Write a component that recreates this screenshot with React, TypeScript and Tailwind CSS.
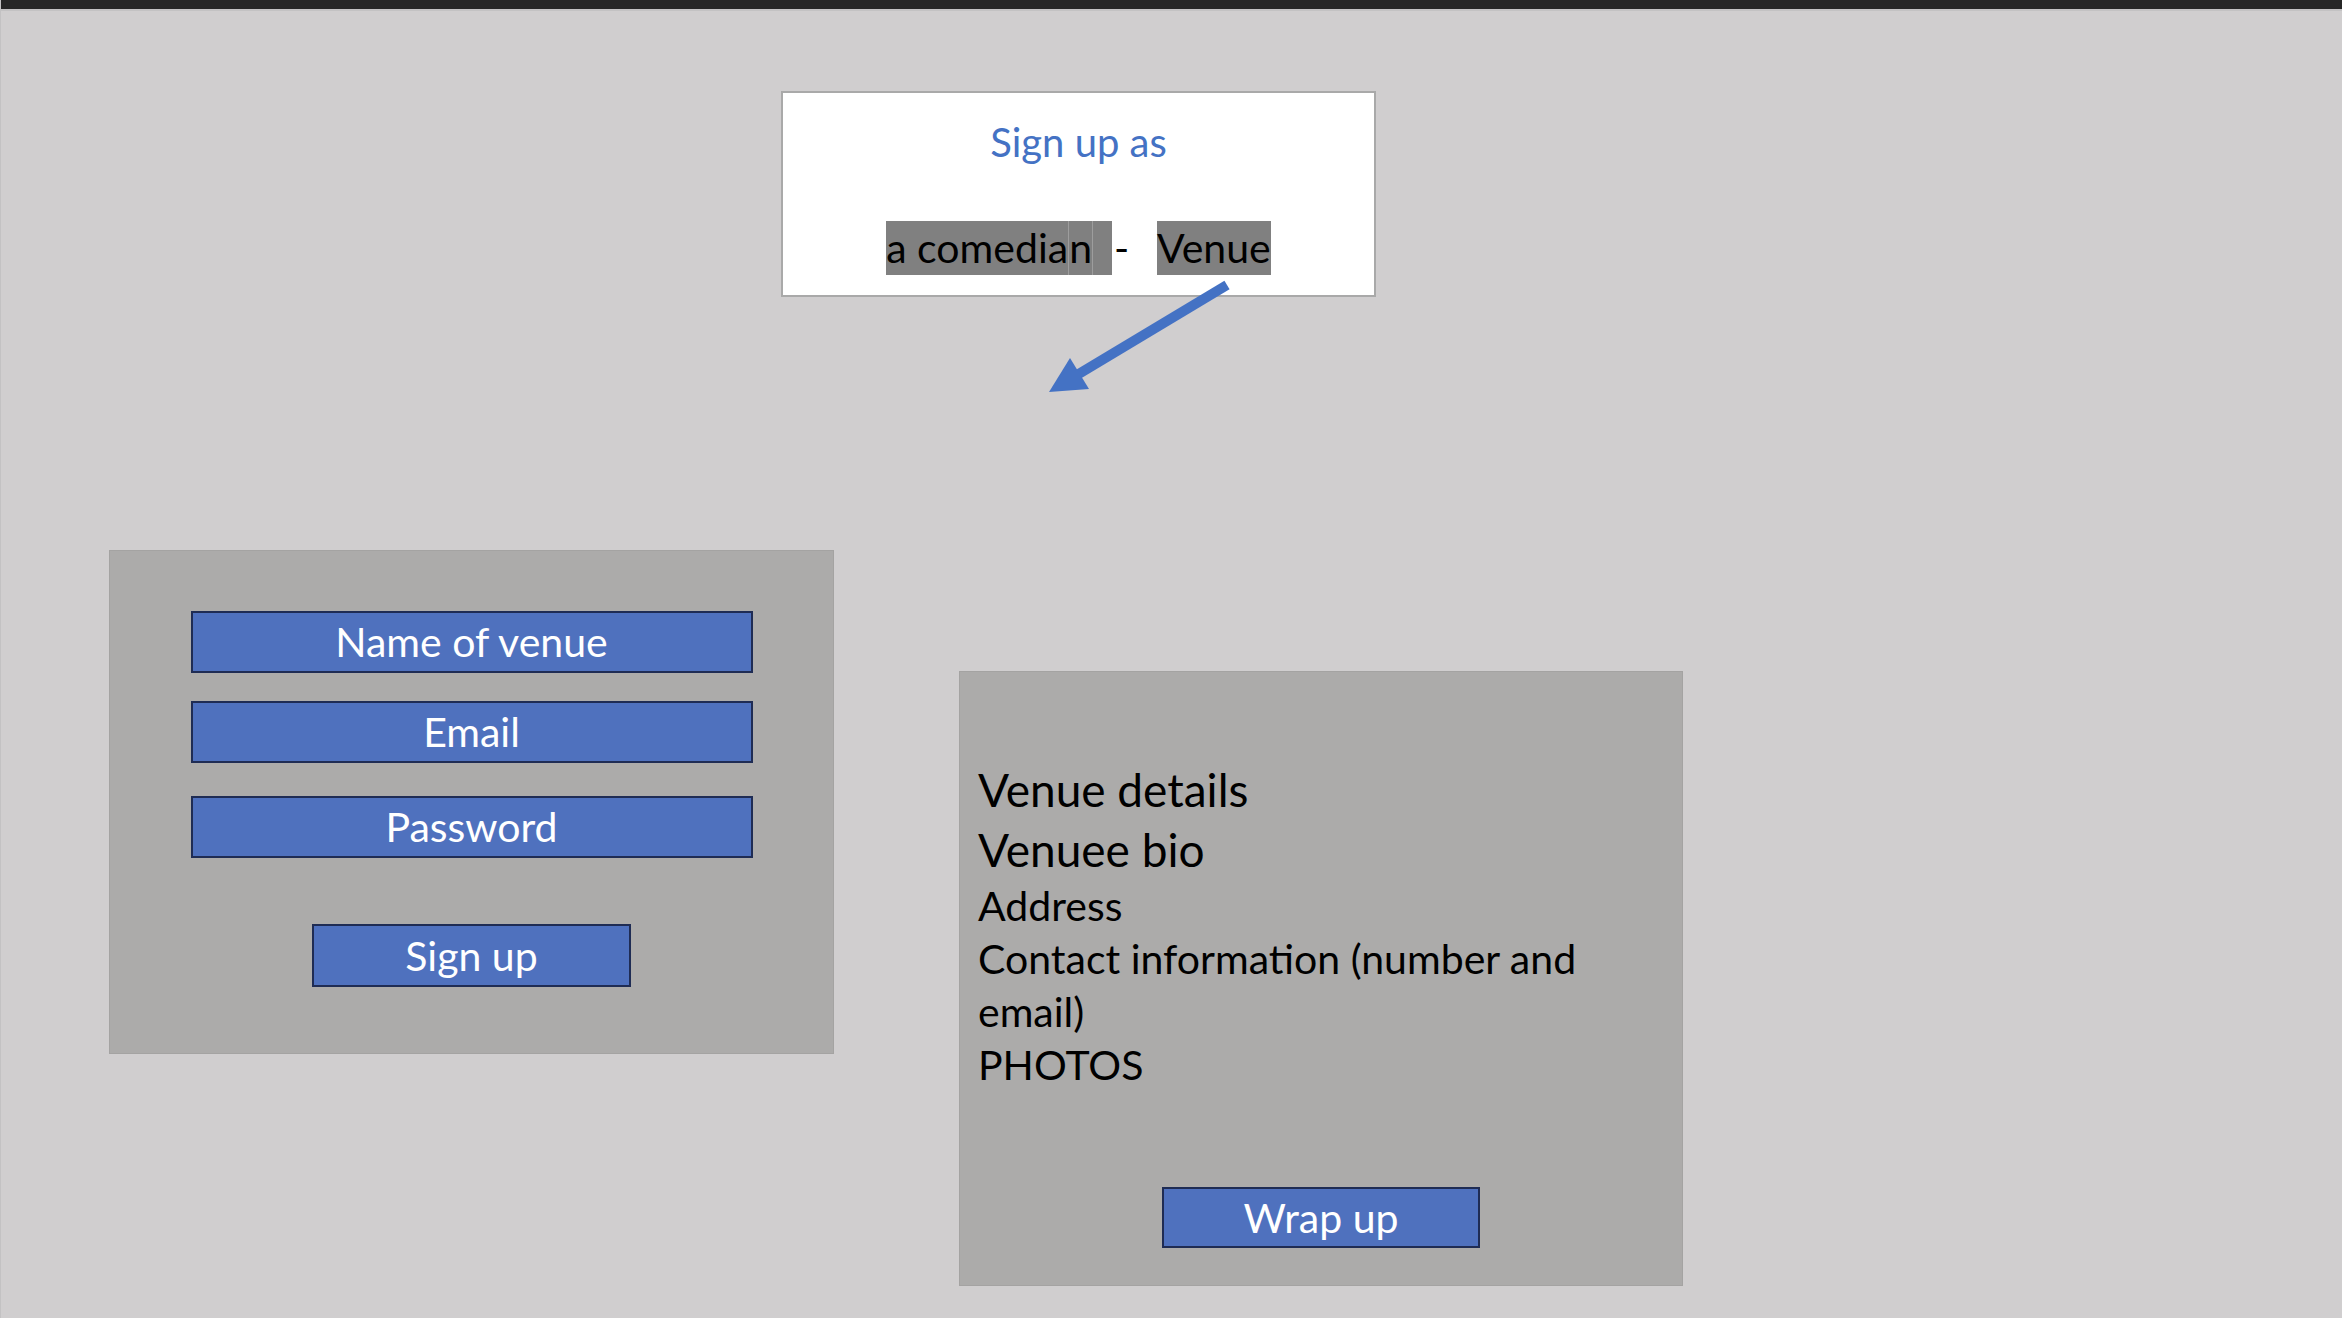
const blue = 'border-2 border-[#1f2c54] bg-[#4f71be] text-center text-white';

function Field({ label }: { label: string }) {
  return (
    <div className={`${blue} h-[62px] w-[562px] text-[41px] leading-[58px]`}>{label}</div>
  );
}

export default function App() {
  return (
    <div className="relative h-[1318px] w-full overflow-hidden border-l border-[#c3c2c3] bg-[#d0cecf] font-['Lato',sans-serif]">
      <div className="h-[9px] bg-[#262626]" />
      <div className="h-[2px] bg-[#c3c2c3]" />

      {/* role picker */}
      <div className="ml-[780px] mt-[80px] h-[206px] w-[595px] border-2 border-[#a9a9a9] bg-white pt-[24px]">
        <p className="text-center text-[40px] leading-[50px] text-[#4472c4]">Sign up as</p>
        <div className="mt-[54px] flex justify-center text-[41px] leading-[54px] text-black">
          <span className="flex bg-[#808080]">
            <span>a comedia</span>
            <span className="border-l border-[#9d9d9d]">n</span>
            <span className="w-[20px] border-l border-[#9d9d9d]" />
          </span>
          <span className="w-[45px] pl-[2px]">-</span>
          <span className="bg-[#808080]">Venue</span>
        </div>
      </div>

      <div className="mt-[253px] flex items-start">
        {/* sign up form */}
        <div className="ml-[108px] flex h-[504px] w-[725px] flex-col items-center border border-[#a4a3a2] bg-[#acabaa] pt-[60px]">
          <Field label="Name of venue" />
          <div className="mt-[28px]">
            <Field label="Email" />
          </div>
          <div className="mt-[33px]">
            <Field label="Password" />
          </div>
          <button className={`${blue} mt-[66px] h-[63px] w-[319px] text-[41px] leading-[59px]`}>Sign up</button>
        </div>

        {/* venue details */}
        <div className="ml-[125px] mt-[121px] flex h-[615px] w-[724px] flex-col border border-[#a4a3a2] bg-[#acabaa] pl-[18px] pt-[88px] text-black">
          <p className="text-[46px] leading-[60px]">Venue details</p>
          <p className="text-[46px] leading-[60px]">Venuee bio</p>
          <p className="text-[41px] leading-[52px]">Address</p>
          <p className="max-w-[660px] text-[41px] leading-[53px]">Contact information (number and email)</p>
          <p className="text-[41px] leading-[53px]">PHOTOS</p>
          <button className={`${blue} mb-[37px] ml-[184px] mt-auto h-[61px] w-[318px] text-[41px] leading-[57px]`}>Wrap up</button>
        </div>
      </div>

      {/* arrow from Venue down to the form */}
      <svg className="absolute left-[1040px] top-[275px]" width="200" height="125" viewBox="0 0 200 125">
        <line x1="186" y1="10" x2="36" y2="100" stroke="#4472c4" strokeWidth="10" />
        <polygon points="8,117 29,83 48,114" fill="#4472c4" />
      </svg>
    </div>
  );
}
